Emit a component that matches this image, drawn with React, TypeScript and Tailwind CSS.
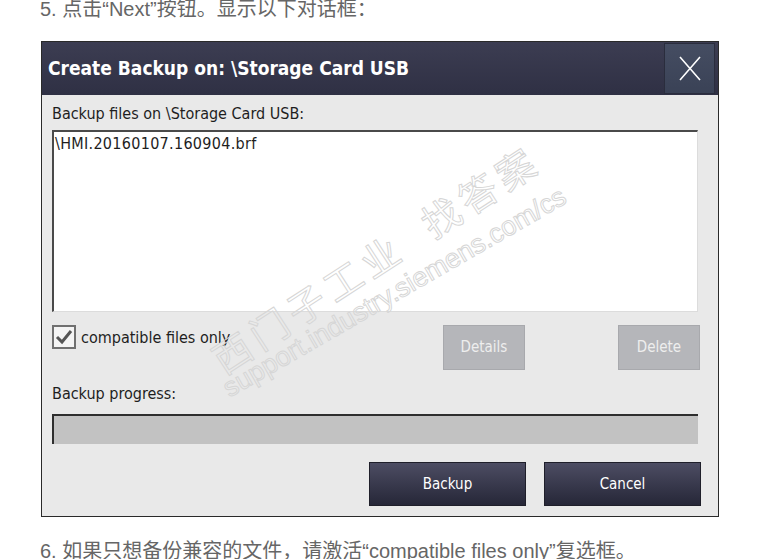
import React from "react";

const dlgFont = { fontFamily: '"DejaVu Sans Condensed", "Liberation Sans", sans-serif' };

export default function App() {
  return (
    <div className="relative w-[779px] h-[559px] overflow-hidden bg-white">
      <div
        className="pl-[40px] h-[44px] -mt-[3px] text-[20px] leading-[24px] text-[#666666]"
        style={{ fontFamily: '"Liberation Sans", "Noto Sans CJK SC", sans-serif' }}
      >
        5. 点击“Next”按钮。显示以下对话框：
      </div>

      <div className="ml-[41px] w-[678px] h-[476px] border border-[#2a2a2a] flex flex-col" style={dlgFont}>
        <div className="h-[53px] flex items-center justify-between bg-gradient-to-b from-[#3c3d52] to-[#2f3044] pl-[6px] pr-[3px]">
          <span className="text-white text-[19px] font-bold">Create Backup on: \Storage Card USB</span>
          <div className="w-[51px] h-[51px] flex items-center justify-center bg-gradient-to-b from-[#454d62] to-[#3a4256] border border-[#2a2d3d]">
            <svg width="24" height="25" viewBox="0 0 24 25">
              <path d="M2 1 L22 24 M22 1 L2 24" stroke="#ffffff" strokeWidth="1.6" fill="none" />
            </svg>
          </div>
        </div>

        <div className="flex-1 bg-[#e9e9e9] flex flex-col px-[10px]">
          <div className="mt-[9px] text-[16px] leading-[19px] text-[#1e1e1e]">Backup files on \Storage Card USB:</div>
          <div className="mt-[7px] w-[646px] h-[182px] bg-white border-t-2 border-l-2 border-[#4a4a4a] border-r border-b border-r-[#dcdcdc] border-b-[#dcdcdc] px-[1px] pt-[2px]">
            <div className="text-[16px] leading-[19px] text-[#1e1e1e] tracking-[0.3px]">\HMI.20160107.160904.brf</div>
          </div>

          <div className="mt-[13px] flex items-start">
            <div className="w-[391px] flex items-center gap-[5px]">
              <div className="w-[24px] h-[24px] border-2 border-[#707070] bg-[#f4f4f4] flex items-center justify-center">
                <svg width="18" height="16" viewBox="0 0 18 16">
                  <path d="M2 8 L7 13 L16 2" stroke="#555555" strokeWidth="3" fill="none" />
                </svg>
              </div>
              <span className="text-[16px] leading-[19px] text-[#1e1e1e]">compatible files only</span>
            </div>
            <div className="w-[82px] h-[45px] bg-[#b5b6ba] border border-[#a8a9ad] flex items-center justify-center text-[15px] text-[#eeeeee]">
              Details
            </div>
            <div className="ml-[93px] w-[82px] h-[45px] bg-[#b5b6ba] border border-[#a8a9ad] flex items-center justify-center text-[15px] text-[#eeeeee]">
              Delete
            </div>
          </div>

          <div className="mt-[14px] text-[16px] leading-[19px] text-[#1e1e1e]">Backup progress:</div>
          <div className="mt-[11px] w-[646px] h-[30px] bg-[#c2c2c2] border-t-2 border-l-2 border-[#2e2e2e]" />

          <div className="mt-[18px] flex justify-end gap-[18px] pr-[7px]">
            <div className="w-[157px] h-[44px] bg-gradient-to-b from-[#4d4d63] to-[#262738] border border-[#1f1f2a] flex items-center justify-center text-[15px] text-white">
              Backup
            </div>
            <div className="w-[157px] h-[44px] bg-gradient-to-b from-[#4d4d63] to-[#262738] border border-[#1f1f2a] flex items-center justify-center text-[15px] text-white">
              Cancel
            </div>
          </div>
        </div>
      </div>

      <div
        className="pl-[40px] mt-[22px] text-[20px] leading-[24px] text-[#666666]"
        style={{ fontFamily: '"Liberation Sans", "Noto Sans CJK SC", sans-serif' }}
      >
        6. 如果只想备份兼容的文件，请激活“compatible files only”复选框。
      </div>

      <div className="pointer-events-none absolute inset-0">
        <span
          className="absolute left-[226px] top-[340px] origin-bottom-left -rotate-[33deg] whitespace-pre text-[38px] leading-none text-transparent [-webkit-text-stroke:1px_#d6d6d6] tracking-[6px]"
          style={{ fontFamily: '"Noto Sans CJK SC", sans-serif' }}
        >
          西门子工业  找答案
        </span>
        <span
          className="absolute left-[232px] top-[375px] origin-bottom-left -rotate-[30deg] whitespace-pre text-[27px] leading-none text-transparent [-webkit-text-stroke:1px_#d6d6d6]"
          style={{ fontFamily: '"Liberation Sans", sans-serif' }}
        >
          support.industry.siemens.com/cs
        </span>
      </div>
    </div>
  );
}
